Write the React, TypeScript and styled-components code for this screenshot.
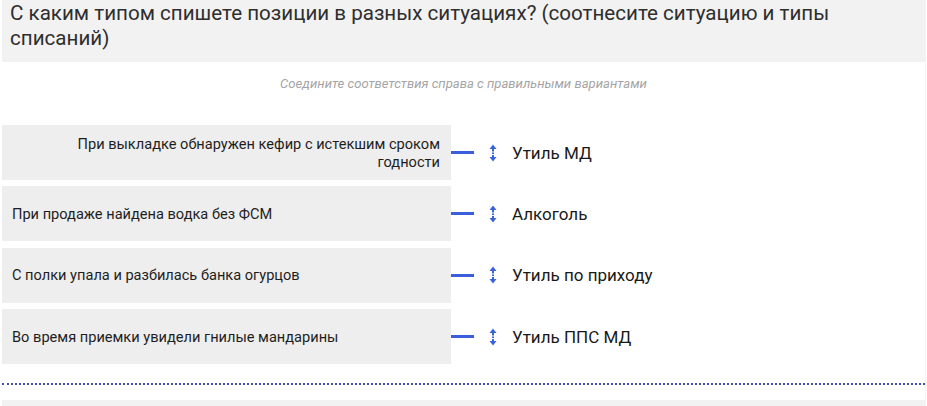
import styled, { createGlobalStyle } from "styled-components"

const GlobalStyle = createGlobalStyle`
  body {
    margin: 0;
    background: #ffffff;
    font-family: Roboto, "Liberation Sans", sans-serif;
  }
`

const Page = styled.div`
  width: 923px;
  margin-left: 2px;
  border-right: 1px solid #f3f3f3;
`

const Question = styled.div`
  background-color: #f2f2f2;
  color: #2e2e2e;
  font-size: 20.6px;
  line-height: 25px;
  padding: 1px 8px 11px;
`

const Hint = styled.div`
  color: #a5a5a5;
  font-size: 13.1px;
  font-style: italic;
  line-height: 16px;
  text-align: center;
  margin: 14px 0 33px;
`

const Pairs = styled.div`
  display: flex;
  flex-direction: column;
  gap: 6.4px;
`

const Pair = styled.div`
  display: flex;
  align-items: center;
  height: 55px;
`

const Situation = styled.div<{ $right?: boolean }>`
  width: 449px;
  height: 100%;
  box-sizing: border-box;
  background-color: #eeeeee;
  color: #1e1e1e;
  font-size: 14.6px;
  line-height: 18px;
  padding: 0 11px 0 10px;
  display: flex;
  align-items: center;
  justify-content: ${(p) => (p.$right ? "flex-end" : "flex-start")};
  text-align: ${(p) => (p.$right ? "right" : "left")};

  span {
    max-width: 400px;
  }
`

const Connector = styled.div`
  width: 23px;
  height: 3px;
  background-color: #3b5fdc;
  margin-right: 15px;
`

const Handle = styled.svg`
  flex: none;
  margin-right: 15px;
`

const Answer = styled.div`
  color: #1a1a1a;
  font-size: 17px;
`

const Divider = styled.div`
  margin-top: 19px;
  border-top: 2px dotted #3f52b0;
`

const NextBlock = styled.div`
  margin-top: 15px;
  height: 10px;
  background-color: #f2f2f2;
`

// up/down drag handle next to each answer
const DragHandle = () => (
  <Handle width="8" height="18" viewBox="0 0 8 18">
    <path d="M4 0.5 L7.5 5 L0.5 5 Z" fill="#3b63d8" />
    <rect x="3" y="5" width="2" height="2.5" fill="#3b63d8" />
    <rect x="3" y="8.5" width="2" height="1.5" fill="#3b63d8" />
    <rect x="3" y="11" width="2" height="2" fill="#3b63d8" />
    <path d="M4 17.5 L7.5 13 L0.5 13 Z" fill="#3b63d8" />
  </Handle>
)

const pairs = [
  { left: "При выкладке обнаружен кефир с истекшим сроком годности", right: "Утиль МД", alignRight: true },
  { left: "При продаже найдена водка без ФСМ", right: "Алкоголь" },
  { left: "С полки упала и разбилась банка огурцов", right: "Утиль по приходу" },
  { left: "Во время приемки увидели гнилые мандарины", right: "Утиль ППС МД" },
]

const App = () => {
  return (
    <>
      <GlobalStyle />
      <Page>
        <Question>
          С каким типом спишете позиции в разных ситуациях? (соотнесите ситуацию и типы списаний)
        </Question>
        <Hint>Соедините соответствия справа с правильными вариантами</Hint>
        <Pairs>
          {pairs.map((p) => (
            <Pair key={p.left}>
              <Situation $right={p.alignRight}>
                <span>{p.left}</span>
              </Situation>
              <Connector />
              <DragHandle />
              <Answer>{p.right}</Answer>
            </Pair>
          ))}
        </Pairs>
        <Divider />
        <NextBlock />
      </Page>
    </>
  )
}

export default App
